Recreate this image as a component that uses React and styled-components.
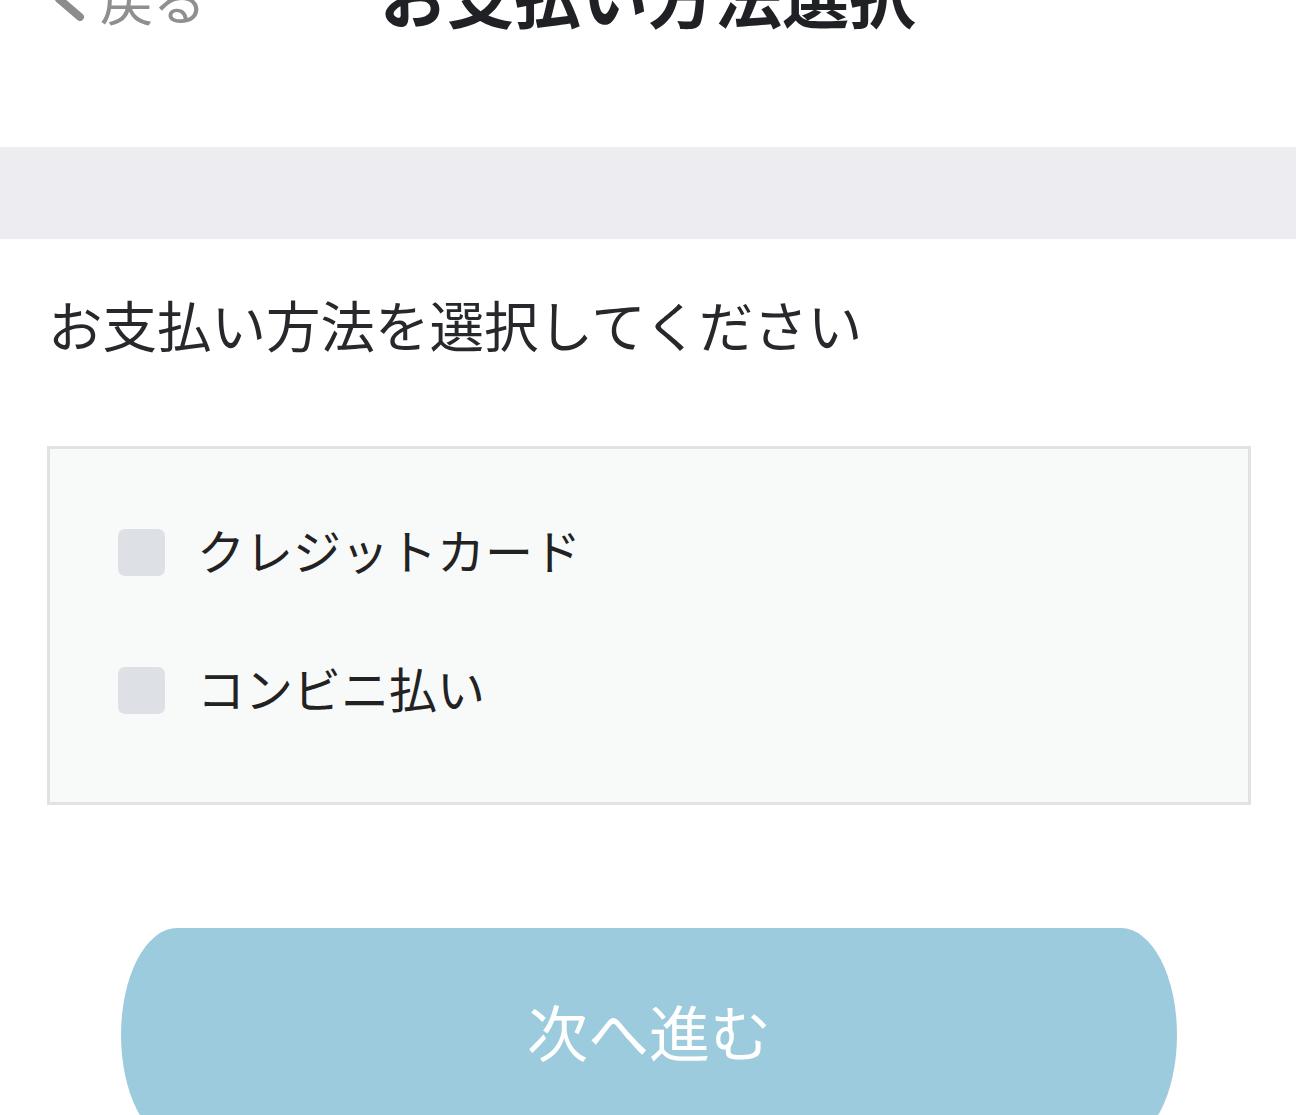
import React from 'react';
import styled, { createGlobalStyle } from 'styled-components';

const GlobalStyle = createGlobalStyle`
  body {
    margin: 0;
    background: #fff;
    font-family: "Noto Sans CJK JP", "Noto Sans", sans-serif;
    color: #25272a;
  }
`;

const Page = styled.div`
  margin-top: -40px;
  width: 1296px;
`;

const Header = styled.header`
  height: 187px;
  display: grid;
  grid-template-columns: 1fr auto 1fr;
  align-items: start;
`;

const Back = styled.a`
  display: flex;
  align-items: center;
  gap: 14px;
  padding-left: 52px;
  margin-top: 12px;
  height: 53px;
  color: #8f8f8f;
  font-size: 53px;
  line-height: 53px;
  text-decoration: none;
`;

const Title = styled.h1`
  margin: 0;
  font-size: 67px;
  line-height: 67px;
  font-weight: 700;
  color: #1f2124;
`;

const Band = styled.div`
  height: 92px;
  background: #edecf1;
`;

const Prompt = styled.p`
  margin: 58px 0 0 48px;
  font-size: 54.5px;
  line-height: 54px;
  color: #26282b;
`;

const Options = styled.div`
  margin: 95px 45px 0 47px;
  border: 3px solid #e2e2e2;
  background: #f8f9f9;
  padding: 80px 68px 88px;
  display: flex;
  flex-direction: column;
  gap: 91px;
`;

const Option = styled.label`
  display: flex;
  align-items: center;
  gap: 32px;
  height: 47px;
  font-size: 48px;
  color: #222;
`;

const OptionText = styled.span`
  line-height: 41px;
  padding-bottom: 6px;
`;

const Check = styled.span`
  width: 47px;
  height: 47px;
  border-radius: 7px;
  background: #dde1e6;
  flex: none;
`;

const Footer = styled.div`
  display: flex;
  justify-content: center;
  padding: 123px 119px 0 121px;
`;

const NextButton = styled.button`
  width: 100%;
  height: 214px;
  border: none;
  border-radius: 56px / 107px;
  background: #9dcbde;
  color: #fff;
  font-family: inherit;
  font-size: 61px;
  font-weight: 400;
  padding: 0 0 10px;
`;

const methods = ['クレジットカード', 'コンビニ払い'];

export default function App() {
  return (
    <Page>
      <GlobalStyle />
      <Header>
        <Back href="#">
          <svg width="34" height="44" viewBox="0 0 34 44">
            <path d="M28 4 L7 22 L28 40" fill="none" stroke="#8c8c8c" strokeWidth="8" strokeLinecap="round" strokeLinejoin="round" />
          </svg>
          戻る
        </Back>
        <Title>お支払い方法選択</Title>
        <div />
      </Header>
      <Band />
      <Prompt>お支払い方法を選択してください</Prompt>
      <Options>
        {methods.map((m) => (
          <Option key={m}>
            <Check />
            <OptionText>{m}</OptionText>
          </Option>
        ))}
      </Options>
      <Footer>
        <NextButton>次へ進む</NextButton>
      </Footer>
    </Page>
  );
}
